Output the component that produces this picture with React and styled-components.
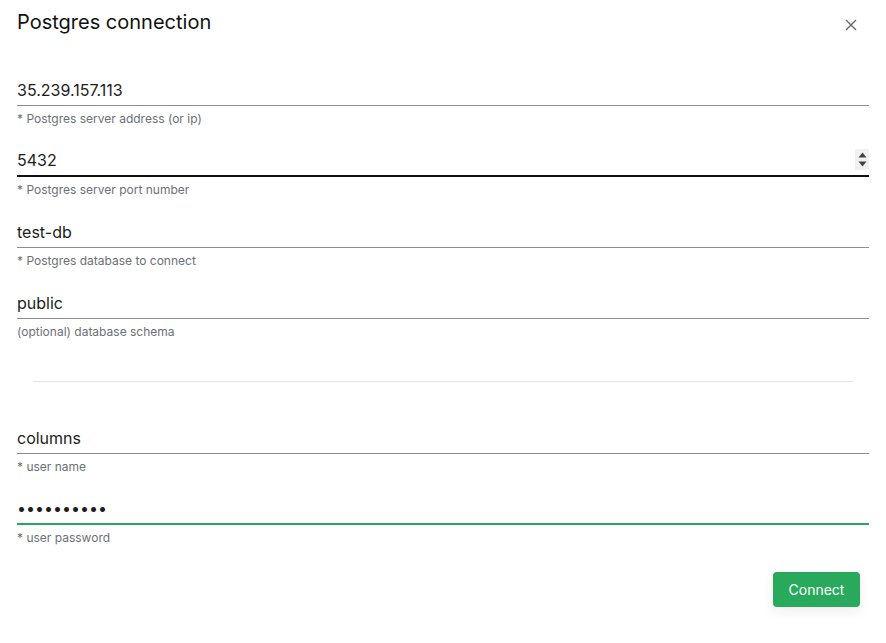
import React from "react";
import styled, { createGlobalStyle } from "styled-components";

const GlobalStyle = createGlobalStyle`
  body {
    margin: 0;
    background: #fff;
    font-family: Inter, "Noto Sans", sans-serif;
  }
`;

const fields = [
  { value: "35.239.157.113", help: "* Postgres server address (or ip)" },
  { value: "5432", help: "* Postgres server port number", line: "dark", spinner: true },
  { value: "test-db", help: "* Postgres database to connect" },
  { value: "public", help: "(optional) database schema" },
];

const userFields = [
  { value: "columns", help: "* user name" },
  { value: "abcdefghij", help: "* user password", line: "green", type: "password" },
];

const Spinner = () => (
  <SpinBox>
    <svg width="9" height="6" viewBox="0 0 9 6">
      <path d="M0.5 5.5 L4.5 0.5 L8.5 5.5 Z" fill="#444" />
    </svg>
    <svg width="9" height="6" viewBox="0 0 9 6">
      <path d="M0.5 0.5 L4.5 5.5 L8.5 0.5 Z" fill="#444" />
    </svg>
  </SpinBox>
);

const FieldBlock = ({ f }) => (
  <Field>
    <InputRow line={f.line}>
      <Input type={f.type || "text"} defaultValue={f.value} readOnly />
      {f.spinner && <Spinner />}
    </InputRow>
    <Help>{f.help}</Help>
  </Field>
);

const App = () => {
  return (
    <Dialog>
      <GlobalStyle />
      <Header>
        <Title>Postgres connection</Title>
        <Close aria-label="close">
          <svg width="12" height="12" viewBox="0 0 12 12">
            <path d="M1 1 L11 11 M11 1 L1 11" stroke="#666" strokeWidth="1.4" />
          </svg>
        </Close>
      </Header>
      {fields.map((f) => (
        <FieldBlock key={f.help} f={f} />
      ))}
      <Divider />
      {userFields.map((f) => (
        <FieldBlock key={f.help} f={f} />
      ))}
      <Footer>
        <Button>Connect</Button>
      </Footer>
    </Dialog>
  );
};

export default App;

const Dialog = styled.div`
  width: 886px;
  height: 643px;
  box-sizing: border-box;
  padding: 10px 17px 0;
  display: flex;
  flex-direction: column;
`;

const Header = styled.div`
  display: flex;
  justify-content: space-between;
  align-items: center;
  margin-bottom: 40px;
`;

const Title = styled.h2`
  margin: 0;
  font-size: 20px;
  line-height: 24px;
  font-weight: 400;
  color: #111;
`;

const Close = styled.button`
  border: 0;
  background: none;
  padding: 0;
  margin-right: 12px;
  margin-top: 5px;
  display: flex;
`;

const Field = styled.div`
  display: flex;
  flex-direction: column;
  margin-bottom: 18px;
`;

const InputRow = styled.div`
  height: 32px;
  box-sizing: border-box;
  display: flex;
  align-items: center;
  border-bottom: ${({ line }) =>
    line === "dark"
      ? "2px solid #111"
      : line === "green"
      ? "2px solid #27a85a"
      : "1px solid #8c8c8c"};
`;

const Input = styled.input`
  flex: 1;
  border: 0;
  outline: none;
  padding: 0;
  background: transparent;
  font-family: Inter, sans-serif;
  font-size: 16px;
  color: #1c1c1c;
  height: 24px;
`;

const SpinBox = styled.div`
  width: 14px;
  height: 21px;
  background: #f1f1f1;
  display: flex;
  flex-direction: column;
  align-items: center;
  justify-content: center;
  gap: 3px;
  margin-bottom: 2px;
`;

const Help = styled.div`
  margin-top: 5px;
  font-size: 12px;
  line-height: 16px;
  color: #6b7076;
`;

const Divider = styled.hr`
  margin: 23px 16px 40px;
  border: 0;
  border-top: 1px solid #e3e3e3;
  height: 0;
`;

const Footer = styled.div`
  display: flex;
  justify-content: flex-end;
  padding-right: 9px;
  margin-top: 8px;
`;

const Button = styled.button`
  width: 87px;
  height: 35px;
  border: 0;
  border-radius: 4px;
  background: #28a95c;
  color: #fff;
  font-family: Inter, sans-serif;
  font-size: 14px;
  box-shadow: 0 4px 12px rgba(30, 40, 60, 0.08);
`;
